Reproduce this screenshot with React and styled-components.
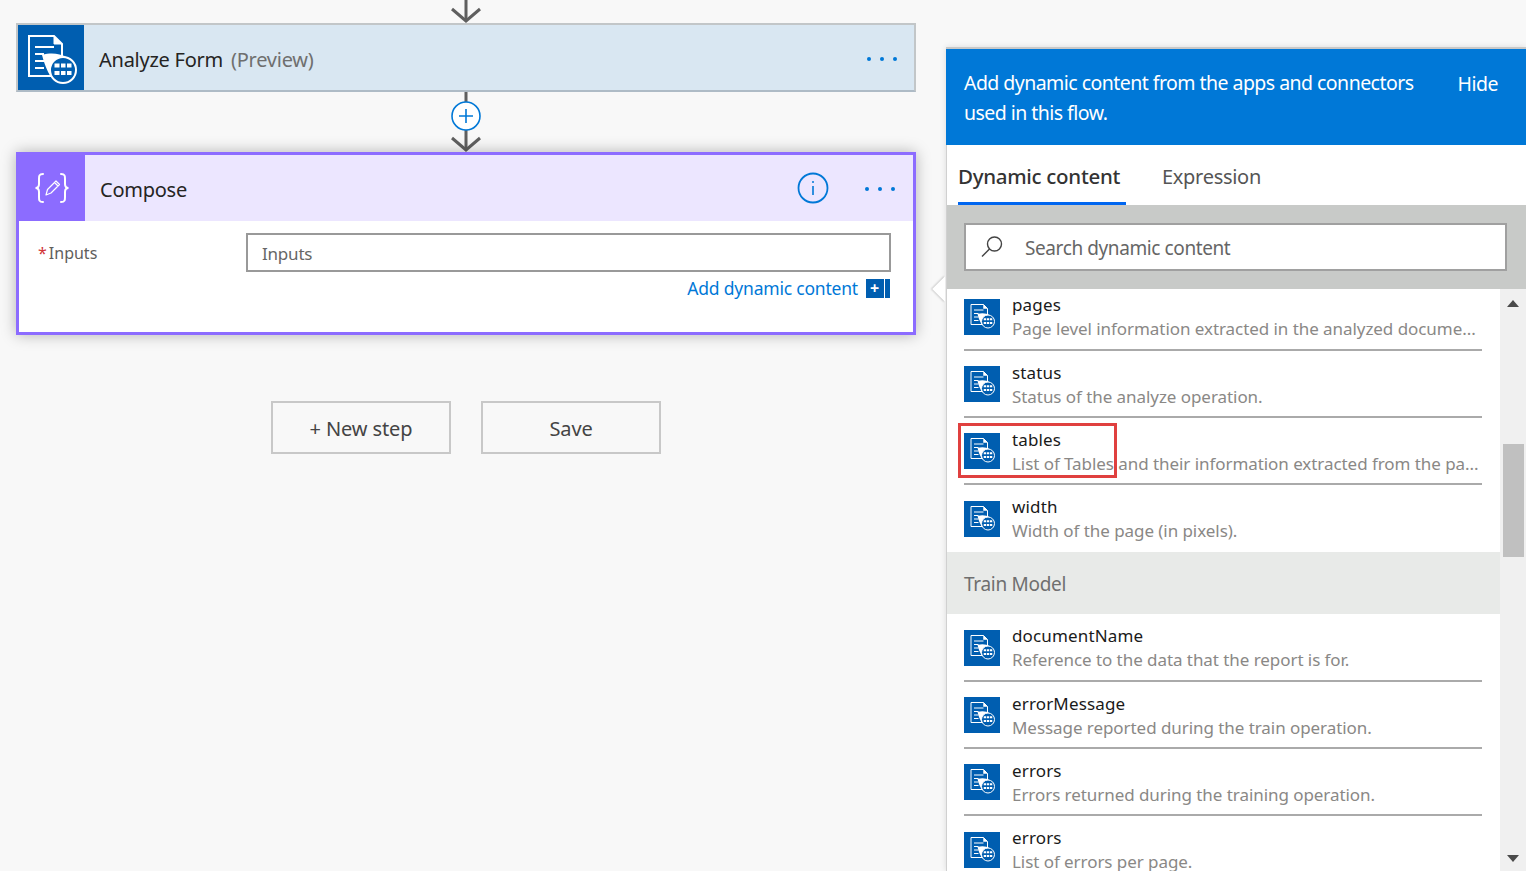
import React from 'react';
import styled, { createGlobalStyle } from 'styled-components';

const GlobalStyle = createGlobalStyle`
  html, body {
    margin: 0;
    padding: 0;
    background: #f8f8f8;
  }
  * {
    box-sizing: border-box;
  }
`;

const Page = styled.div`
  width: 1526px;
  height: 871px;
  display: flex;
  overflow: hidden;
  font-family: "Noto Sans", "Open Sans", sans-serif;
  background: #f8f8f8;
  color: #252423;
`;

const Canvas = styled.div`
  width: 946px;
  padding-left: 16px;
  display: flex;
  flex-direction: column;
  flex-shrink: 0;
`;

const Flow = styled.div`
  width: 900px;
  display: flex;
  flex-direction: column;
  align-items: center;
`;

const Connector = styled.svg`
  display: block;
  flex-shrink: 0;
`;

const AnalyzeCard = styled.div`
  width: 100%;
  height: 69px;
  display: flex;
  align-items: stretch;
  background: #d9e7f2;
  border: 2px solid #c2c6c8;
  border-bottom-color: #aebbc6;
`;

const CardIcon = styled.div`
  width: 66px;
  flex-shrink: 0;
  display: flex;
  align-items: center;
  justify-content: center;
  background: ${({ $bg }) => $bg};
`;

const CardTitle = styled.div`
  flex: 1;
  padding-left: ${({ $pad }) => $pad}px;
  font-size: 20px;
  letter-spacing: -0.25px;
  line-height: 70px;
  color: #252423;

  span {
    margin-left: 3px;
    color: #6f6f6f;
  }
`;

const Dots = styled.div`
  display: flex;
  align-items: center;
  gap: 9px;
  padding-top: 2px;
  margin-right: ${({ $right }) => $right}px;
`;

const Dot = styled.span`
  width: 4px;
  height: 4px;
  border-radius: 50%;
  background: #0078d7;
`;

const ComposeCard = styled.div`
  width: 100%;
  height: 183px;
  display: flex;
  flex-direction: column;
  background: #fff;
  border: 3px solid #8c6cff;
  box-shadow: 0 0 14px rgba(0, 0, 0, 0.28);
`;

const ComposeHeader = styled.div`
  height: 66px;
  display: flex;
  align-items: stretch;
  background: #ece6ff;
`;

const InfoButton = styled.div`
  display: flex;
  align-items: center;
  margin-right: 36px;
`;

const ComposeBody = styled.div`
  flex: 1;
  padding: 12px 22px 0 19px;
  display: grid;
  grid-template-columns: 208px 1fr;
  grid-template-rows: 39px 22px;
  align-content: start;
  row-gap: 5px;
`;

const FieldLabel = styled.div`
  font-size: 16px;
  line-height: 40px;
  color: #605e5c;

  b {
    font-weight: 400;
    color: #d13438;
    margin-right: 2px;
  }
`;

const FieldInput = styled.div`
  border: 2px solid #999;
  background: #fff;
  padding-left: 14px;
  font-size: 17px;
  letter-spacing: -0.2px;
  line-height: 38px;
  color: #666;
`;

const AddDynamic = styled.div`
  grid-column: 2;
  display: flex;
  justify-content: flex-end;
  align-items: center;
  gap: 8px;
  padding-right: 1px;
  font-size: 17.5px;
  letter-spacing: -0.2px;
  line-height: 22px;
  color: #0078d7;
`;

const AddBox = styled.span`
  width: 24px;
  height: 19px;
  display: flex;
  background: linear-gradient(to right, #005eb0 0 18px, #fff 18px 19px, #005eb0 19px);
  color: #fff;
  font-size: 16px;
  font-weight: 700;
  line-height: 18px;
  padding-left: 4px;
`;

const Actions = styled.div`
  display: flex;
  gap: 30px;
  margin-top: 66px;
`;

const ActionButton = styled.button`
  width: 180px;
  height: 53px;
  padding: 2px 0 0;
  border: 2px solid #c8c8c8;
  background: #f8f8f8;
  font-family: inherit;
  font-size: 20px;
  letter-spacing: -0.1px;
  color: #444;
`;

const Panel = styled.div`
  position: relative;
  flex: 1;
  margin-top: 47px;
  display: flex;
  flex-direction: column;
  background: #fff;
  border-top: 2px solid #c8c8c8;
  box-shadow: 0 0 6px rgba(0, 0, 0, 0.12);
`;

const Beak = styled.div`
  position: absolute;
  left: -10px;
  top: 231px;
  width: 18px;
  height: 18px;
  background: #fff;
  transform: rotate(45deg);
  box-shadow: -1px 1px 2px rgba(0, 0, 0, 0.18);
  clip-path: polygon(-20% 120%, -20% -20%, 120% 120%);
`;

const PanelHeader = styled.div`
  height: 96px;
  padding: 19px 28px 0 18px;
  display: flex;
  justify-content: space-between;
  background: #0078d7;
  color: #fff;
  font-size: 19.5px;
  line-height: 30px;
`;

const HeaderText = styled.div`
  width: 470px;
  letter-spacing: -0.54px;
`;

const HideLink = styled.span`
  padding-top: 1px;
  letter-spacing: -0.5px;
`;

const PanelBody = styled.div`
  flex: 1;
  min-height: 0;
  display: flex;
  flex-direction: column;
  border-left: 1px solid #d0d0d0;
`;

const Tabs = styled.div`
  height: 60px;
  padding-left: 11px;
  display: flex;
  gap: 36px;
`;

const Tab = styled.div`
  padding-right: 6px;
  font-size: ${({ $active }) => ($active ? 20.5 : 20)}px;
  letter-spacing: -0.3px;
  line-height: ${({ $active }) => ($active ? 62 : 64)}px;
  color: ${({ $active }) => ($active ? '#333' : '#555')};
  font-weight: ${({ $active }) => ($active ? 500 : 400)};
  border-bottom: 3px solid ${({ $active }) => ($active ? '#0066f0' : 'transparent')};
`;

const SearchBand = styled.div`
  height: 84px;
  padding: 18px 19px 0 17px;
  background: #c8cac8;
`;

const SearchBox = styled.div`
  height: 48px;
  padding-left: 14px;
  display: flex;
  align-items: center;
  gap: 21px;
  background: #fff;
  border: 2px solid #a0a0a0;
  font-size: 19px;
  letter-spacing: -0.4px;
  line-height: 46px;
  color: #666;
`;

const SearchLabel = styled.span`
  padding-top: 2px;
`;

const ListArea = styled.div`
  flex: 1;
  min-height: 0;
  display: flex;
  overflow: hidden;
`;

const List = styled.div`
  flex: 1;
  min-width: 0;
  margin-top: -5.75px;
`;

const Row = styled.div`
  position: relative;
  height: 67.25px;
  margin: 0 18px 0 17px;
  padding-top: 10px;
  display: flex;
  gap: 12px;
  border-bottom: 2px solid ${({ $last }) => ($last ? 'transparent' : '#aaa')};
`;

const RowIcon = styled.div`
  width: 36px;
  height: 36px;
  margin-top: 5.5px;
  flex-shrink: 0;
  display: flex;
  background: #005eb0;
`;

const RowText = styled.div`
  min-width: 0;
  line-height: 24px;
  white-space: nowrap;
`;

const RowName = styled.div`
  font-size: 17px;
  letter-spacing: 0.15px;
  color: #1a1a1a;
`;

const RowDesc = styled.div`
  font-size: 17px;
  letter-spacing: -0.06px;
  color: #8a8886;
`;

const Highlight = styled.div`
  position: absolute;
  left: -6px;
  top: 5px;
  width: 159px;
  height: 55px;
  border: 3px solid #e0403f;
  pointer-events: none;
`;

const GroupHeader = styled.div`
  height: 62px;
  padding-left: 17px;
  background: #e8eae8;
  font-size: 19px;
  letter-spacing: -0.3px;
  line-height: 64px;
  color: #6f6f6f;
`;

const Scrollbar = styled.div`
  width: 26px;
  flex-shrink: 0;
  display: flex;
  flex-direction: column;
  align-items: center;
  background: #f0f0f0;
`;

const ScrollArrow = styled.div`
  width: 0;
  height: 0;
  border-left: 6px solid transparent;
  border-right: 6px solid transparent;
  margin-top: ${({ $down }) => ($down ? 'auto' : '11px')};
  margin-bottom: ${({ $down }) => ($down ? '9px' : '0')};
  ${({ $down }) =>
    $down ? 'border-top: 7px solid #4a4a4a;' : 'border-bottom: 7px solid #4a4a4a;'}
`;

const ScrollThumb = styled.div`
  width: 21px;
  height: 113px;
  margin-top: 137px;
  background: #c0c0c0;
`;

const DownArrow = () => (
  <Connector width="34" height="23" viewBox="0 0 34 23">
    <path d="M17 0 V21" stroke="#5f5f5f" strokeWidth="3" fill="none" />
    <path d="M3 9 L17 21 L31 9" stroke="#5f5f5f" strokeWidth="3" fill="none" />
  </Connector>
);

const PlusConnector = () => (
  <Connector width="34" height="60" viewBox="0 0 34 60">
    <path d="M17 0 V10 M17 38 V58" stroke="#5f5f5f" strokeWidth="3" fill="none" />
    <path d="M3 46 L17 58 L31 46" stroke="#5f5f5f" strokeWidth="3" fill="none" />
    <circle cx="17" cy="24" r="14" fill="#fff" stroke="#0078d7" strokeWidth="1.6" />
    <path d="M10 24 H24 M17 17 V31" stroke="#0078d7" strokeWidth="1.6" fill="none" />
  </Connector>
);

// same drawing at both sizes, the small one sits a little tighter in its box
const FormIcon = ({ size, box = '0 0 66 66' }) => (
  <svg width={size} height={size} viewBox={box} fill="none">
    <path d="M11 11 H36 L44 19 V51 H11 Z" stroke="#fff" strokeWidth="2" />
    <path d="M36 11 V19 H44" fill="#fff" stroke="#fff" strokeWidth="1" />
    <path d="M17 22 H36 M17 29 H26 M17 36 H26 M17 43 H26" stroke="#fff" strokeWidth="2" />
    <path d="M24 30 C34 27 42 29 48 32 L33 52 C29 46 26 38 24 30 Z" fill="#fff" />
    <circle cx="45" cy="45" r="13" fill="#005eb0" stroke="#fff" strokeWidth="2" />
    <path
      d="M36.5 38.5 h5 v4 h-5 Z M43 38.5 h4.5 v4 h-4.5 Z M49 38.5 h4.5 v4 h-4.5 Z M36.5 46 h5 v4 h-5 Z M43 46 h4.5 v4 h-4.5 Z M49 46 h4.5 v4 h-4.5 Z"
      fill="#fff"
    />
  </svg>
);

const ComposeIcon = () => (
  <svg width="36" height="36" viewBox="0 0 36 36" fill="none" stroke="#fff" strokeLinecap="round">
    <path d="M9 4 C5 4 5 6 5 9 V14 C5 16 4 18 1.5 18 C4 18 5 20 5 22 V27 C5 30 5 32 9 32" strokeWidth="2" />
    <path d="M27 4 C31 4 31 6 31 9 V14 C31 16 32 18 34.5 18 C32 18 31 20 31 22 V27 C31 30 31 32 27 32" strokeWidth="2" />
    <path d="M12 25 L13.5 19.5 L22 11 L25.5 14.5 L17 23 Z M20.5 12.5 L24 16" strokeWidth="1.2" strokeLinejoin="round" />
  </svg>
);

const InfoIcon = () => (
  <svg width="32" height="32" viewBox="0 0 32 32" fill="none" stroke="#0078d7">
    <circle cx="16" cy="16" r="14.5" strokeWidth="1.8" />
    <path d="M16 14 V23" strokeWidth="1.6" />
    <circle cx="16" cy="10" r="1" fill="#0078d7" stroke="none" />
  </svg>
);

const SearchIcon = () => (
  <svg width="24" height="24" viewBox="0 0 24 24" fill="none" stroke="#444" strokeWidth="1.4">
    <circle cx="14.5" cy="9" r="7" />
    <path d="M9.5 14 L2 21.5" />
  </svg>
);

const firstGroup = [
  { name: 'pages', desc: 'Page level information extracted in the analyzed docume...' },
  { name: 'status', desc: 'Status of the analyze operation.' },
  { name: 'tables', desc: 'List of Tables and their information extracted from the pa...', marked: true },
  { name: 'width', desc: 'Width of the page (in pixels).', last: true },
];

const trainGroup = [
  { name: 'documentName', desc: 'Reference to the data that the report is for.' },
  { name: 'errorMessage', desc: 'Message reported during the train operation.' },
  { name: 'errors', desc: 'Errors returned during the training operation.' },
  { name: 'errors', desc: 'List of errors per page.', last: true },
];

const ContentRow = ({ item }) => (
  <Row $last={item.last}>
    <RowIcon>
      <FormIcon size={36} box="-3 0 72 72" />
    </RowIcon>
    <RowText>
      <RowName>{item.name}</RowName>
      <RowDesc>{item.desc}</RowDesc>
    </RowText>
    {item.marked && <Highlight />}
  </Row>
);

const ThreeDots = ({ right }) => (
  <Dots $right={right}>
    <Dot />
    <Dot />
    <Dot />
  </Dots>
);

const App = () => {
  return (
    <Page>
      <GlobalStyle />
      <Canvas>
        <Flow>
          <DownArrow />
          <AnalyzeCard>
            <CardIcon $bg="#005eb0">
              <FormIcon size={66} />
            </CardIcon>
            <CardTitle $pad={15}>
              Analyze Form <span>(Preview)</span>
            </CardTitle>
            <ThreeDots right={17} />
          </AnalyzeCard>
          <PlusConnector />
          <ComposeCard>
            <ComposeHeader>
              <CardIcon $bg="#8c6cff">
                <ComposeIcon />
              </CardIcon>
              <CardTitle $pad={15}>Compose</CardTitle>
              <InfoButton>
                <InfoIcon />
              </InfoButton>
              <ThreeDots right={18} />
            </ComposeHeader>
            <ComposeBody>
              <FieldLabel>
                <b>*</b>Inputs
              </FieldLabel>
              <FieldInput>Inputs</FieldInput>
              <AddDynamic>
                Add dynamic content
                <AddBox>+</AddBox>
              </AddDynamic>
            </ComposeBody>
          </ComposeCard>
          <Actions>
            <ActionButton>+ New step</ActionButton>
            <ActionButton>Save</ActionButton>
          </Actions>
        </Flow>
      </Canvas>
      <Panel>
        <Beak />
        <PanelHeader>
          <HeaderText>Add dynamic content from the apps and connectors used in this flow.</HeaderText>
          <HideLink>Hide</HideLink>
        </PanelHeader>
        <PanelBody>
          <Tabs>
            <Tab $active>Dynamic content</Tab>
            <Tab>Expression</Tab>
          </Tabs>
          <SearchBand>
            <SearchBox>
              <SearchIcon />
              <SearchLabel>Search dynamic content</SearchLabel>
            </SearchBox>
          </SearchBand>
          <ListArea>
            <List>
              {firstGroup.map((item) => (
                <ContentRow key={item.name} item={item} />
              ))}
              <GroupHeader>Train Model</GroupHeader>
              {trainGroup.map((item) => (
                <ContentRow key={item.desc} item={item} />
              ))}
            </List>
            <Scrollbar>
              <ScrollArrow />
              <ScrollThumb />
              <ScrollArrow $down />
            </Scrollbar>
          </ListArea>
        </PanelBody>
      </Panel>
    </Page>
  );
};

export default App;
